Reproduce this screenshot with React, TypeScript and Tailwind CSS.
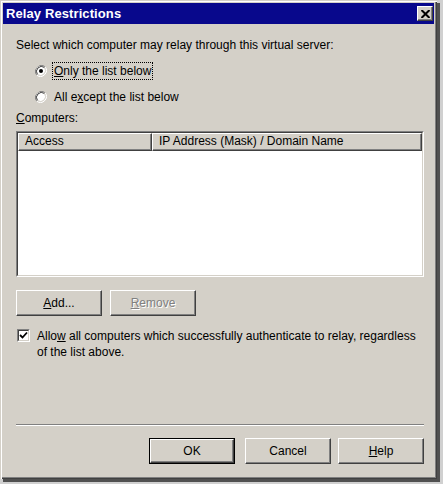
import React from "react";

const font = { fontFamily: '"Liberation Sans", Arial, sans-serif' };

function Btn({
  children,
  def,
  disabled,
  className = "",
}: {
  children: React.ReactNode;
  def?: boolean;
  disabled?: boolean;
  className?: string;
}) {
  const inner = (
    <div
      className={
        "flex items-center justify-center w-full h-full bg-[#d4d0c8] border border-t-white border-l-white border-r-[#404040] border-b-[#404040] shadow-[inset_-1px_-1px_0_#808080] " +
        (disabled ? "text-[#808080] [text-shadow:1px_1px_0_#ffffff]" : "text-black")
      }
    >
      {children}
    </div>
  );
  if (def) {
    return (
      <div className={"h-[26px] w-[86px] border border-black " + className}>{inner}</div>
    );
  }
  return <div className={"h-[26px] w-[86px] " + className}>{inner}</div>;
}

function Radio({ checked }: { checked?: boolean }) {
  return (
    <svg width="12" height="12" viewBox="0 0 12 12" className="shrink-0">
      <path d="M10.2 1.8 A6 6 0 0 0 1.8 10.2" fill="none" stroke="#808080" strokeWidth="1" />
      <path d="M1.8 10.2 A6 6 0 0 0 10.2 1.8" fill="none" stroke="#ffffff" strokeWidth="1" />
      <circle cx="6" cy="6" r="5" fill="#ffffff" />
      <path d="M9.5 2.5 A5 5 0 0 0 2.5 9.5" fill="none" stroke="#404040" strokeWidth="1" />
      <path d="M2.5 9.5 A5 5 0 0 0 9.5 2.5" fill="none" stroke="#d4d0c8" strokeWidth="1" />
      {checked && <circle cx="6" cy="6" r="2" fill="#000000" />}
    </svg>
  );
}

export default function App() {
  return (
    <div className="w-[443px] h-[484px] bg-[#d0d0d0]" style={font}>
      <div className="w-[437px] h-[479px] bg-[#d4d0c8] p-[3px] flex flex-col shadow-[inset_1px_1px_0_#d4d0c8,inset_2px_2px_0_#ffffff,inset_-1px_-1px_0_#404040,inset_-2px_-2px_0_#808080,3px_3px_0_#505050]">
        {/* Title bar */}
        <div className="h-[21px] bg-[#08088c] flex items-center justify-between pl-[3px] pr-[1px]">
          <span className="text-white font-bold text-[13px] leading-none tracking-[0.1px]">Relay Restrictions</span>
          <div className="w-[16px] h-[15px] bg-[#d4d0c8] border border-t-white border-l-white border-r-[#404040] border-b-[#404040] shadow-[inset_-1px_-1px_0_#808080] flex items-center justify-center">
            <svg width="9" height="8" viewBox="0 0 9 8">
              <path d="M0.5 0 L8.5 8 M8.5 0 L0.5 8" stroke="#000" strokeWidth="2" />
            </svg>
          </div>
        </div>

        {/* Content */}
        <div className="px-[13px] flex flex-col text-[12px] text-black">
          <div className="mt-[13px] h-[16px] leading-[16px]">
            Select which computer may relay through this virtual server:
          </div>

          <div className="mt-[9px] h-[18px] flex items-center pl-[19px]">
            <Radio checked />
            <span className="ml-[5px] h-[18px] leading-[16px] px-[1px] border border-dotted border-black">
              <span className="underline">O</span>nly the list below
            </span>
          </div>
          <div className="mt-[8px] h-[18px] flex items-center pl-[19px]">
            <Radio />
            <span className="ml-[6px] leading-[16px] px-[1px]">
              All e<span className="underline">x</span>cept the list below
            </span>
          </div>

          <div className="mt-[4px] h-[16px] leading-[16px]">
            <span className="underline">C</span>omputers:
          </div>

          {/* List box */}
          <div className="mt-[5px] h-[146px] w-[408px] border border-t-[#808080] border-l-[#808080] border-r-white border-b-white">
            <div className="w-full h-full border border-t-[#404040] border-l-[#404040] border-r-[#d4d0c8] border-b-[#d4d0c8] bg-white flex flex-col">
              <div className="h-[18px] flex bg-[#d4d0c8]">
                <div className="w-[134px] h-full border border-t-white border-l-white border-r-[#404040] border-b-[#404040] shadow-[inset_-1px_-1px_0_#808080] pl-[6px] leading-[15px]">
                  Access
                </div>
                <div className="flex-1 h-full border border-t-white border-l-white border-r-[#404040] border-b-[#404040] shadow-[inset_-1px_-1px_0_#808080] pl-[6px] leading-[15px]">
                  IP Address (Mask) / Domain Name
                </div>
              </div>
            </div>
          </div>

          {/* Add / Remove */}
          <div className="mt-[13px] flex">
            <Btn>
              <span>
                <span className="underline">A</span>dd...
              </span>
            </Btn>
            <Btn disabled className="ml-[8px]">
              <span>
                <span className="underline">R</span>emove
              </span>
            </Btn>
          </div>

          {/* Checkbox */}
          <div className="mt-[13px] flex items-start">
            <div className="ml-[1px] w-[13px] h-[13px] shrink-0 border border-t-[#808080] border-l-[#808080] border-r-white border-b-white">
              <div className="w-full h-full border border-t-[#404040] border-l-[#404040] border-r-[#d4d0c8] border-b-[#d4d0c8] bg-white flex items-center justify-center">
                <svg width="9" height="9" viewBox="0 0 9 9">
                  <path d="M1 4 L3.5 6.5 L8 1.5" fill="none" stroke="#000" strokeWidth="1.8" />
                </svg>
              </div>
            </div>
            <div className="ml-[7px] leading-[16px] -mt-[1px]">
              Allo<span className="underline">w</span> all computers which successfully authenticate to relay, regardless
              <br />
              of the list above.
            </div>
          </div>

          {/* Separator */}
          <div className="mt-[64px] w-[408px] h-[2px] border-t border-t-[#808080] border-b border-b-white" />

          {/* Bottom buttons */}
          <div className="mt-[12px] flex justify-end w-[408px]">
            <Btn def>OK</Btn>
            <Btn className="ml-[10px]">Cancel</Btn>
            <Btn className="ml-[7px]">
              <span>
                <span className="underline">H</span>elp
              </span>
            </Btn>
          </div>
        </div>
      </div>
    </div>
  );
}
